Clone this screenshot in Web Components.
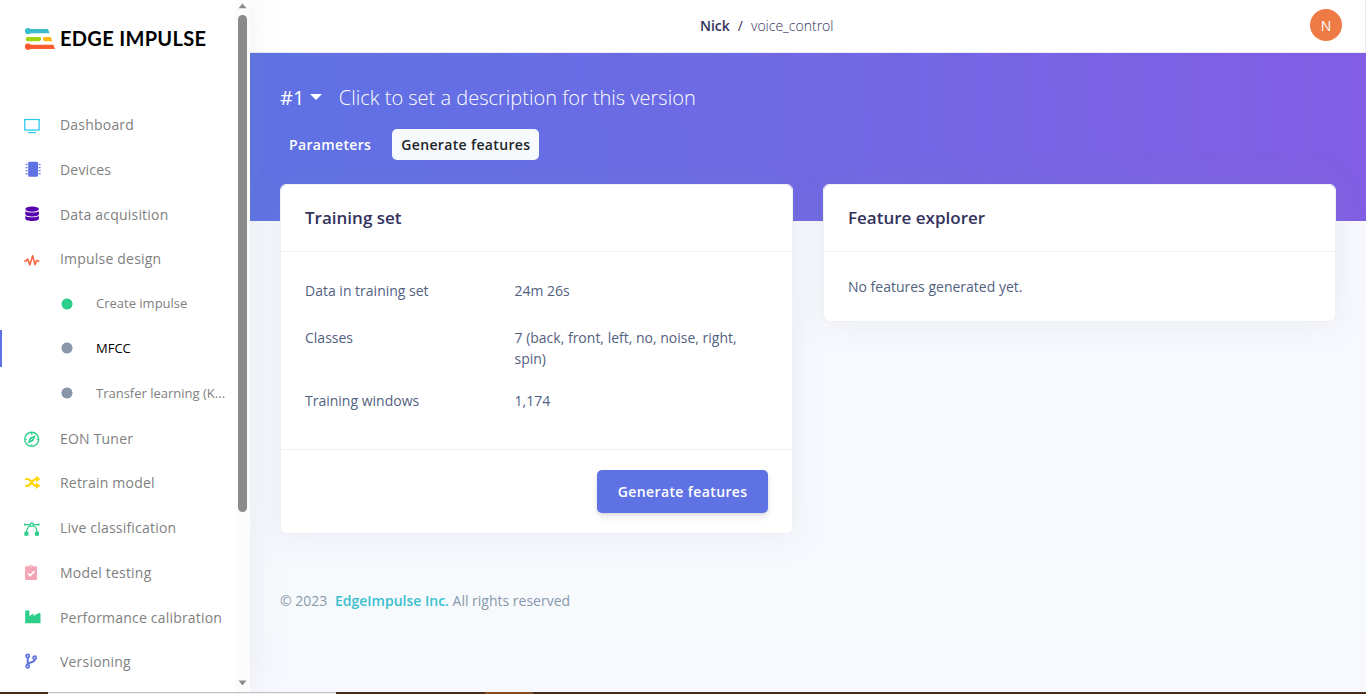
<!DOCTYPE html>
<html lang="en">
<head>
<meta charset="utf-8">
<title>voice_control - MFCC - Edge Impulse</title>
<style>
html,body{margin:0;height:100%;overflow:hidden}
body{font-family:"Open Sans",sans-serif;font-size:14px;line-height:21px;color:#525f7f;background:#f8f9fe}
</style>
</head>
<body>
<studio-app></studio-app>
<script>
const define=(name,html)=>customElements.define(name,class extends HTMLElement{
  constructor(){super();this.attachShadow({mode:'open'}).innerHTML=typeof html==='function'?html(this):html}
});

const icons={
  screen:'<g fill="none" stroke="#2dc8ee" stroke-width="1.3"><rect x=".8" y="1.500" width="14.300" height="10.500"/><path d="M4 14.500h8"/></g>',
  chip:'<g transform="translate(1)"><rect x="3.200" y=".8" width="9.800" height="15" rx="1.200" fill="#5e72e4"/><path d="M.6 3.500h2M.6 6.600h2M.6 9.600h2M.6 12.700h2M13.600 3.500h2M13.600 6.600h2M13.600 9.600h2M13.600 12.700h2" stroke="#7383e7" stroke-width="1.400"/></g>',
  data:'<g fill="#5603ad" transform="translate(1.100 .4)"><ellipse cx="7" cy="2.700" rx="6.800" ry="2.600"/><path d="M.2 4.800c2 1.700 11.600 1.700 13.600 0v3.100c0 3-13.600 3-13.600 0zM.2 9.700c2 1.700 11.600 1.700 13.600 0v2.700c0 3-13.600 3-13.600 0z"/></g>',
  pulse:'<path d="M.1 8.900h2.200l1.300-2 2.300 6L8.600 3.700l2.400 8.900 1.700-4.300.7.700h2" fill="none" stroke="#fb6340" stroke-width="1.550" stroke-linejoin="round"/>',
  compass:'<g fill="none" stroke="#2dce89" stroke-width="1.400"><circle cx="7.700" cy="8.300" r="7"/><path d="M7.700 2v1.700M7.700 12.900v1.700M1.300 8.300H3M12.400 8.300H14" stroke-width="1.100"/><path d="M11.800 4.200 9.400 10 3.600 12.400 6 6.600z" fill="#2dce89" stroke="none"/><path d="m6.800 9.300 1.900-1.900" stroke="#fff" stroke-width="1"/></g>',
  shuffle:'<path d="M1.200 4h2.200c1.200 0 1.800.5 2.500 1.300l3.700 4.200c.8.9 1.300 1.300 2.400 1.300h1M1.200 10.800h2.200c1.200 0 1.800-.5 2.500-1.300l3.700-4.200C10.400 4.400 10.900 4 12 4h1" fill="none" stroke="#ffd600" stroke-width="2.200"/><path d="M12 .8 16.300 4 12 7.300zM12 7.500l4.300 3.300L12 14z" fill="#ffd600"/>',
  bezier:'<g fill="none" stroke="#2dce89" stroke-width="1.300"><path d="M2.600 11.500c0-4 1.700-5.800 4-7M13 11.500c0-4-1.700-5.800-4-7M1 3.600h5M9.500 3.600h5"/><circle cx="7.800" cy="3.700" r="1.700"/></g><circle cx="1.100" cy="3.600" r="1.200" fill="#2dce89"/><circle cx="14.500" cy="3.600" r="1.200" fill="#2dce89"/><path d="M.4 10.700h4v4h-4zM11 10.700h4v4h-4z" fill="#2dce89"/>',
  clip:'<rect x="1.100" y="2.300" width="12" height="13.600" rx="1.300" fill="#f3a4b5"/><path d="M4.300 4V2.400h1.200C5.700.2 8.500.2 8.700 2.400h1.200V4z" fill="#f3a4b5"/><circle cx="7.100" cy="2.500" r=".7" fill="#fff"/><path d="m4 9.300 2.200 2.200 4.300-4.300" stroke="#fff" stroke-width="1.700" fill="none"/>',
  factory:'<path d="M1.200 1.400h4.200V7l4.200-2.600v2.700l4.200-2.700c.9-.5 2.700-.4 2.700.3v9.600H1.200z" fill="#2dce89"/>',
  branch:'<g fill="none" stroke="#5e72e4" stroke-width="1.700"><circle cx="3.700" cy="2.900" r="1.600"/><circle cx="3.700" cy="13.300" r="1.600"/><circle cx="10.700" cy="4.800" r="1.600"/><path d="M3.700 4.600v7.100M10.700 6.500c0 3.400-5.200 2-6.700 4.500" stroke-width="2"/></g>'
};

define('brand-logo',`<style>
:host{display:flex;align-items:center;height:25px;padding:26px 0 0 24px;font:700 20px/25px Lato,sans-serif;color:#000}
svg{display:block;margin-right:5px}span{letter-spacing:.32px;white-space:nowrap}
</style><svg width="31" height="24" viewBox="0 0 31 24"><g fill="#3bbccb"><circle cx="4" cy="4" r="3.100"/><path d="M4 2h20l1.500 4.200H4z"/></g><rect x="1.700" y="9.900" width="15.500" height="4.300" rx="2.100" fill="#a2d10e"/><path d="M21 9.900h5.700l1.700 4.300H21a2.150 2.150 0 0 1 0-4.300z" fill="#ffb612"/><g fill="#fa5a2c"><circle cx="4" cy="19.700" r="3.100"/><path d="M4 17.700h25.400l1.600 4.300H4z"/></g></svg><span>EDGE IMPULSE</span>`);

define('nav-item',el=>`<style>
:host{display:flex;align-items:center;height:44.750px;box-sizing:border-box;padding-left:24px;color:#7f7f7f;white-space:nowrap}
svg{display:block;width:17px;height:17px;margin-right:19px;overflow:visible;position:relative;top:${el.getAttribute('drop')||1}px}
span{letter-spacing:.2px}
</style><svg viewBox="0 0 17 17">${icons[el.getAttribute('icon')]}</svg><span><slot></slot></span>`);

define('nav-subitem',`<style>
:host{display:flex;align-items:center;height:44.860px;padding-left:61px;color:#7f7f7f;font-size:13px;white-space:nowrap;--dot:#8898aa}
:host([done]){--dot:#2dce89}
:host([active]){color:#000;padding-left:0}
:host([active])::before{content:"";width:2px;height:37px;background:#5e72e4;margin-right:59px}
i{width:12px;height:12px;border-radius:50%;background:radial-gradient(circle,var(--dot) 5.200px,transparent 5.900px);margin-right:23px}
</style><i></i><span><slot></slot></span>`);

define('scroll-rail',`<style>
:host{display:flex;flex-direction:column;align-items:center;width:15px;background:#fcfcfc}
svg{display:block;flex:none}
i{width:9px;height:497px;border-radius:5px;background:#8b8b8b}b{flex:1}
</style><svg width="15" height="15"><path d="M3.500 8.300 7.500 3.400l4 4.900z" fill="#8b8b8b"/></svg><i></i><b></b><svg width="15" height="15"><path d="m3.500 3.500 4 4.900 4-4.900z" fill="#8b8b8b"/></svg>`);

define('side-nav',`<style>
:host{display:flex;width:250px;background:#fff;box-shadow:0 0 32px rgba(136,152,170,.15);z-index:1}
.inner{width:235px;overflow:hidden}nav{padding-top:51.200px}
</style><div class="inner"><brand-logo></brand-logo><nav>
<nav-item icon="screen" drop="2">Dashboard</nav-item>
<nav-item icon="chip" drop="0">Devices</nav-item>
<nav-item icon="data" drop="0">Data acquisition</nav-item>
<nav-item icon="pulse" drop="2">Impulse design</nav-item>
<nav-subitem done>Create impulse</nav-subitem>
<nav-subitem active>MFCC</nav-subitem>
<nav-subitem>Transfer learning (K...</nav-subitem>
<nav-item icon="compass">EON Tuner</nav-item>
<nav-item icon="shuffle">Retrain model</nav-item>
<nav-item icon="bezier" drop="2">Live classification</nav-item>
<nav-item icon="clip" drop="0">Model testing</nav-item>
<nav-item icon="factory" drop="0">Performance calibration</nav-item>
<nav-item icon="branch" drop="0">Versioning</nav-item>
</nav></div><scroll-rail></scroll-rail>`);

define('top-bar',`<style>
:host{display:grid;grid-template-columns:1fr auto 1fr;align-items:center;height:53px;box-sizing:border-box;padding:0 23px 2px 32px;background:#fff;border-bottom:1px solid #e9ecef;border-right:1px solid #e9ecef;color:#32325d}
.path{grid-column:2;font-weight:300;white-space:pre;margin:0 90.500px 0 0}
b{font-weight:600}em{font-style:normal;font-weight:400;padding:0 8px}
.user{justify-self:end;width:32px;height:32px;border-radius:50%;background:#ee7b46;color:#fff;text-align:center;line-height:33px}
</style><div class="path"><b>Nick</b><em>/</em><span>voice_control</span></div><div class="user">N</div>`);

define('version-hero',`<style>
:host{display:block;height:168px;box-sizing:border-box;padding:31px 30px 0;background:linear-gradient(87deg,#5e72e4,#825ee4);color:#fff}
.title{display:flex;align-items:center;height:26px;font-size:20px;white-space:nowrap}
.title i{border:6px solid transparent;border-top-color:#fff;border-bottom:0;margin:0 16.500px 1px 6px}
.title span{font-weight:300}
.tabs{display:flex;margin-top:19px;gap:12px;font-weight:600}
.tabs a{height:31px;line-height:31px;padding:0 9px;border-radius:5px;letter-spacing:.35px}
.tabs .on{background:#f7fafc;color:#212529}
</style><div class="title">#1<i></i><span>Click to set a description for this version</span></div>
<div class="tabs"><a>Parameters</a><a class="on">Generate features</a></div>`);

define('panel-card',`<style>
:host{display:block;box-sizing:border-box;background:#fff;border:1px solid #f0f1f3;border-radius:6px;box-shadow:0 0 32px rgba(136,152,170,.15);background-clip:padding-box}
h3{margin:0;height:66px;line-height:66px;padding:0 24px;font-size:17px;font-weight:600;color:#32325d;border-bottom:1px solid #f0f1f3}
</style><h3><slot name="title"></slot></h3><slot></slot>`);

define('stat-row',`<style>
:host{display:grid;grid-template-columns:209.500px 1fr;padding:13px 24px}
</style><slot name="k"></slot><slot></slot>`);

define('action-button',`<style>
:host{display:block;height:43px;line-height:43px;padding:0 20.500px;border-radius:5px;background:#5e72e4;color:#fff;font-weight:600;letter-spacing:.38px;box-shadow:0 4px 6px rgba(50,50,93,.11),0 1px 3px rgba(0,0,0,.08)}
</style><slot></slot>`);

define('page-footer',`<style>
:host{display:block;margin-top:30px;padding:26px 30px 22px;color:#8898aa;background:linear-gradient(90deg,#f8f9fe,#f6fafd 40px,#f7fafd)}
b{font-weight:600;color:#3bbfce;margin-left:4px}
</style>© 2023 <b>EdgeImpulse Inc.</b> All rights reserved`);

define('desktop-edge',`<style>
:host{display:flex;height:2px;background:#472b18}
i:nth-of-type(1){width:48px}i:nth-of-type(2){width:288px;background:#f4f2f2;border-top:1px solid #c2bebd;box-sizing:border-box}
i:nth-of-type(3){width:149px}i:nth-of-type(4){width:48px;background:#8c4a20}
</style><i></i><i></i><i></i><i></i>`);

define('studio-app',`<style>
:host{display:grid;grid-template-rows:692px 2px;height:694px}
.page{display:flex;overflow:hidden}main{flex:1;min-width:0}
.cards{display:grid;grid-template-columns:1fr 1fr;gap:30px;align-items:start;margin-top:-37px;padding:0 30px}
.stats{padding:15px 0 25px;height:157px}
.foot{display:flex;justify-content:flex-end;padding:20px 24px;border-top:1px solid #f0f1f3}
.value{max-width:226px}.empty{padding:24px}
</style><div class="page"><side-nav></side-nav><main><top-bar></top-bar><version-hero></version-hero>
<div class="cards"><panel-card><span slot="title">Training set</span>
<div class="stats"><stat-row><span slot="k">Data in training set</span><span>24m 26s</span></stat-row>
<stat-row><span slot="k">Classes</span><span class="value">7 (back, front, left, no, noise, right, spin)</span></stat-row>
<stat-row style="padding-top:8px"><span slot="k">Training windows</span><span>1,174</span></stat-row></div>
<div class="foot"><action-button>Generate features</action-button></div></panel-card>
<panel-card><span slot="title">Feature explorer</span><div class="empty">No features generated yet.</div></panel-card></div>
<page-footer></page-footer></main></div><desktop-edge></desktop-edge>`);
</script>
</body>
</html>
